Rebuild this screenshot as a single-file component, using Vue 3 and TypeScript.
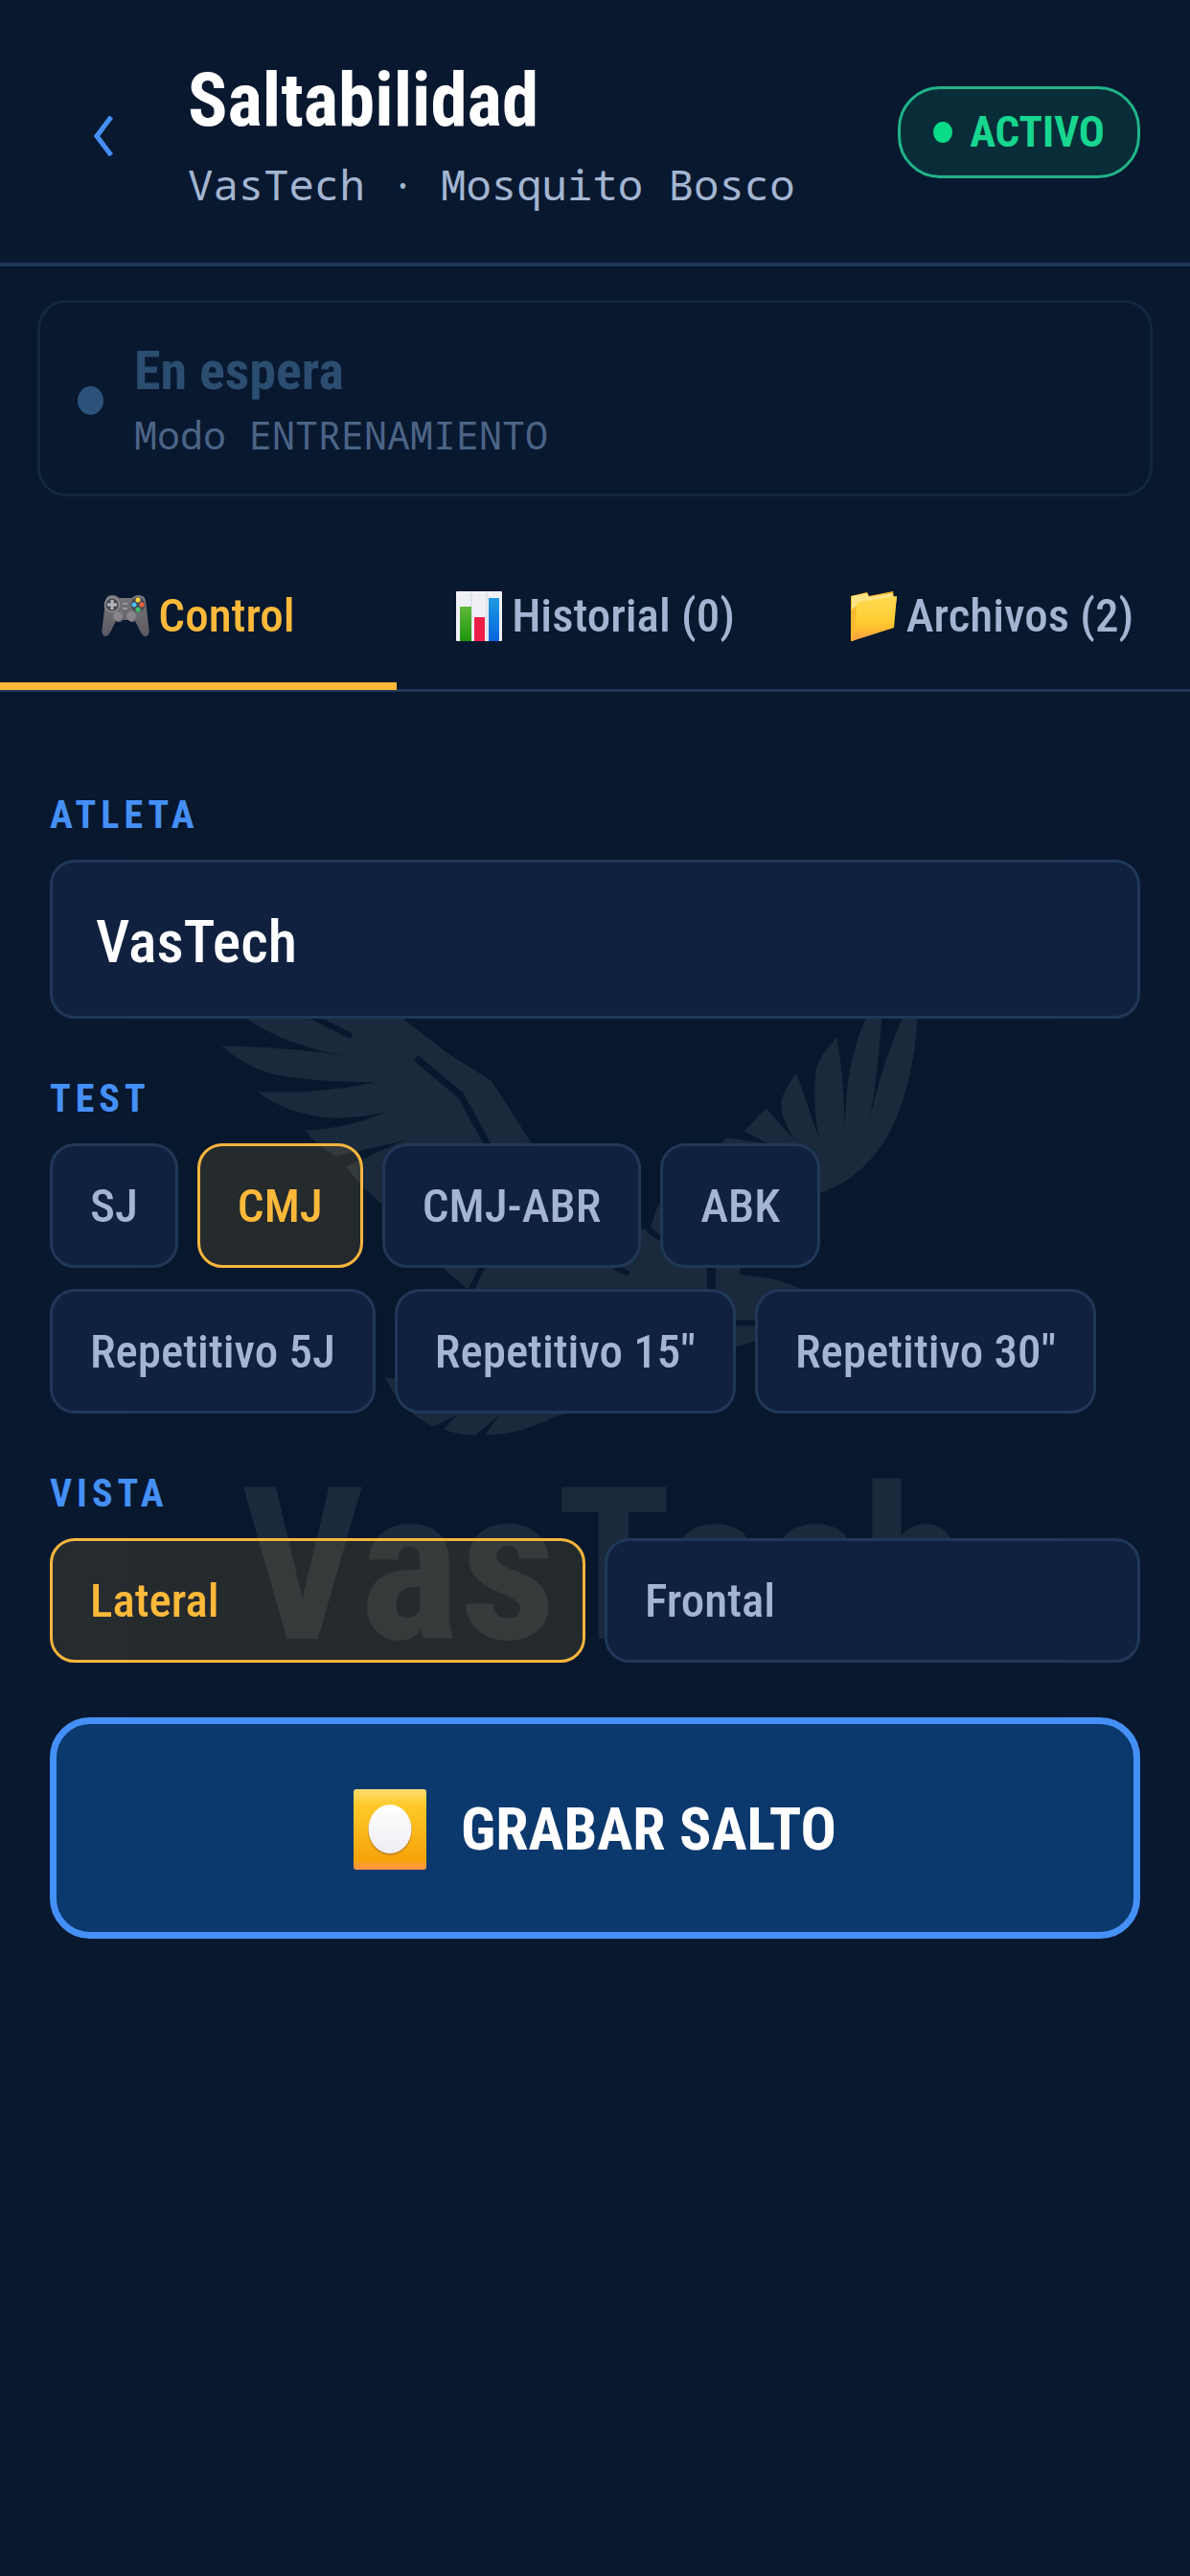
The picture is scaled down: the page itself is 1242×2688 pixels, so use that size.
<script setup lang="ts">
import { ref } from 'vue'

type TabId = 'control' | 'historial' | 'archivos'

const tabs: { id: TabId; label: string }[] = [
  { id: 'control', label: 'Control' },
  { id: 'historial', label: 'Historial (0)' },
  { id: 'archivos', label: 'Archivos (2)' },
]
const tests = ['SJ', 'CMJ', 'CMJ-ABR', 'ABK', 'Repetitivo 5J', 'Repetitivo 15"', 'Repetitivo 30"']
const views = ['Lateral', 'Frontal']

const activeTab = ref<TabId>('control')
const athlete = ref('VasTech')
const activeTest = ref('CMJ')
const activeView = ref('Lateral')
</script>

<template>
  <div class="screen">
    <header class="header">
      <button class="back" type="button" aria-label="Volver">
        <svg width="20" height="42" viewBox="0 0 20 42" aria-hidden="true">
          <path d="M18 1 L3 21 L18 41" fill="none" stroke="#4590f7" stroke-width="5" />
        </svg>
      </button>
      <div class="heading">
        <h1 class="title">Saltabilidad</h1>
        <p class="subtitle">VasTech · Mosquito Bosco</p>
      </div>
      <div class="badge"><span class="badge-dot"></span>ACTIVO</div>
    </header>

    <section class="status">
      <span class="status-dot"></span>
      <div>
        <p class="status-title">En espera</p>
        <p class="status-mode">Modo ENTRENAMIENTO</p>
      </div>
    </section>

    <nav class="tabs" role="tablist">
      <button
        v-for="tab in tabs"
        :key="tab.id"
        class="tab"
        :class="{ active: tab.id === activeTab }"
        type="button"
        role="tab"
        :aria-selected="tab.id === activeTab"
        @click="activeTab = tab.id"
      >
        <svg v-if="tab.id === 'control'" class="tab-icon" viewBox="0 0 50 54" aria-hidden="true">
          <defs>
            <linearGradient id="pad" x1="0" y1="0" x2="0" y2="1">
              <stop offset="0" stop-color="#77777b" />
              <stop offset="1" stop-color="#5d5860" />
            </linearGradient>
          </defs>
          <path d="M4 11 Q5 5 11 5 Q16 5 18 8 H32 Q34 5 39 5 Q45 5 46 11 L49.500 41 Q50 48 46 48 Q43 48 40 42 L35 32 Q31 35 28 31 H22 Q19 35 15 32 L10 42 Q7 48 4 48 Q0 48 .5 41 Z" fill="url(#pad)" />
          <circle cx="11" cy="15" r="7.500" fill="#4b4b52" stroke="#909096" stroke-width="1.500" />
          <path d="M11 10 V20 M6 15 H16" stroke="#b5b5bb" stroke-width="3" />
          <circle cx="38" cy="15" r="7.500" fill="#4b4b52" />
          <circle cx="38" cy="10" r="2.500" fill="#ffd33d" />
          <circle cx="38" cy="20" r="2.500" fill="#36c26e" />
          <circle cx="34" cy="15" r="2.500" fill="#4cc3f2" />
          <circle cx="42" cy="15" r="2.500" fill="#f06245" />
          <circle cx="17" cy="27" r="5" fill="#88868c" />
          <circle cx="31" cy="27" r="5" fill="#88868c" />
          <path d="M22 14 H27 M22 19 H27" stroke="#98989e" stroke-width="2" />
        </svg>
        <svg v-else-if="tab.id === 'historial'" class="tab-icon" viewBox="0 0 50 54" aria-hidden="true">
          <defs>
            <linearGradient id="bar-green" x1="0" y1="0" x2="0" y2="1">
              <stop offset="0" stop-color="#5fb83a" />
              <stop offset="1" stop-color="#1f960e" />
            </linearGradient>
            <linearGradient id="bar-blue" x1="0" y1="0" x2="0" y2="1">
              <stop offset="0" stop-color="#1e9be0" />
              <stop offset="1" stop-color="#0765e0" />
            </linearGradient>
          </defs>
          <rect x="1" y="1" width="48" height="52" rx="1" fill="#f0f1f6" />
          <path d="M17 2 V52 M33 2 V52" stroke="#dfe2ea" stroke-width="2" />
          <rect x="5" y="17" width="12" height="36" fill="url(#bar-green)" />
          <rect x="20" y="28" width="11" height="25" fill="#f01f48" />
          <rect x="35" y="8" width="11" height="45" fill="url(#bar-blue)" />
        </svg>
        <svg v-else class="tab-icon" viewBox="0 0 50 54" aria-hidden="true">
          <defs>
            <linearGradient id="folder" x1="0" y1="0" x2="0" y2="1">
              <stop offset="0" stop-color="#ffdb52" />
              <stop offset=".6" stop-color="#fecb2f" />
              <stop offset="1" stop-color="#fb9a40" />
            </linearGradient>
          </defs>
          <path d="M1 6 L18 2 L20 6 L45 1 L46 7 L49 7 L47 20 L3 53 L1 53 Z" fill="#f7b92d" />
          <path d="M2 6 L18 3 L20 7 L44 3 L45 8 L10 14 L2 20 Z" fill="#ffe487" />
          <path d="M10 12 L49 6 L46 39 L2 53 Q6 35 7 15 Q7 13 10 12 Z" fill="url(#folder)" />
        </svg>
        <span>{{ tab.label }}</span>
      </button>
    </nav>

    <main class="panel">
      <svg class="watermark" viewBox="136 842 968 960" aria-hidden="true">
        <rect x="136" y="842" width="968" height="960" fill="#07172c" />
        <g fill="#1a293b">
          <path
            d="M225 1000 Q300 1010 365 1022 L420 1063 L465 1098 L512 1128 L553 1192 Q610 1260 677 1285 Q683 1250 705 1238 L757 1187 L800 1193 L775 1180 L798 1156 L828 1190 Q812 1165 814 1148 Q818 1133 830 1120 L853 1187 Q846 1150 850 1115 Q856 1098 872 1082 Q880 1130 880 1182 Q880 1110 902 1063 L921 1010 Q918 1110 904 1180 Q916 1115 940 1063 L956 1010 Q960 1090 940 1150 Q918 1218 862 1242 Q800 1262 771 1323 L771 1330 Q810 1332 835 1345 L850 1362 Q810 1355 790 1398 L770 1404 Q700 1440 577 1478 Q540 1497 505 1497 L520 1476 L495 1497 Q475 1497 462 1491 L476 1476 L450 1488 Q415 1470 401 1437 L440 1440 Q500 1400 487 1345 L461 1323 L396 1255 Q377 1240 360 1217 L420 1190 L350 1206 Q330 1197 317 1179 Q360 1178 402 1160 Q360 1170 325 1164 Q290 1157 268 1139 Q330 1142 390 1129 Q330 1129 285 1121 Q255 1113 230 1091 Q310 1093 362 1102 Q300 1092 256 1063 Z"
          />
        </g>
        <g fill="none" stroke="#07172c" stroke-width="6">
          <path d="M325 1061 L366 1081" />
          <path d="M433 1104 L480 1143 L508 1195" stroke-width="7" />
          <path d="M741 1310 V1350" stroke-width="9" />
          <path d="M503 1320 L489 1348 M640 1321 L655 1329 M675 1283 L700 1300 M765 1380 H795" />
        </g>
        <text class="watermark-text" x="629" y="1709" text-anchor="middle">VasTech</text>
      </svg>

      <div class="field">
        <label class="label" for="athlete">ATLETA</label>
        <input id="athlete" v-model="athlete" class="input" type="text" />
      </div>

      <div class="field" role="group" aria-labelledby="test-label">
        <span id="test-label" class="label">TEST</span>
        <div class="chips">
          <button
            v-for="test in tests"
            :key="test"
            class="chip"
            :class="{ active: test === activeTest }"
            type="button"
            :aria-pressed="test === activeTest"
            @click="activeTest = test"
          >
            {{ test }}
          </button>
        </div>
      </div>

      <div class="field" role="group" aria-labelledby="view-label">
        <span id="view-label" class="label">VISTA</span>
        <div class="views">
          <button
            v-for="view in views"
            :key="view"
            class="chip"
            :class="{ active: view === activeView }"
            type="button"
            :aria-pressed="view === activeView"
            @click="activeView = view"
          >
            {{ view }}
          </button>
        </div>
      </div>

      <button class="record" type="button">
        <svg class="record-icon" viewBox="0 0 76 84" aria-hidden="true">
          <defs>
            <linearGradient id="rec" x1="0" y1="0" x2="0" y2="1">
              <stop offset="0" stop-color="#ffdc70" />
              <stop offset=".2" stop-color="#fdc928" />
              <stop offset=".88" stop-color="#f7a30a" />
              <stop offset="1" stop-color="#ff9350" />
            </linearGradient>
            <linearGradient id="disc" x1="0" y1="0" x2="0" y2="1">
              <stop offset="0" stop-color="#ffffff" />
              <stop offset="1" stop-color="#eeeef3" />
            </linearGradient>
          </defs>
          <rect width="76" height="84" rx="3" fill="url(#rec)" />
          <ellipse cx="38" cy="43" rx="23" ry="26" fill="#c98a1c" />
          <ellipse cx="38" cy="41.500" rx="22.500" ry="25.500" fill="url(#disc)" />
        </svg>
        <span>GRABAR SALTO</span>
      </button>
    </main>
  </div>
</template>

<style>
body {
  margin: 0;
  background: #08182f;
}
</style>

<style scoped>
.screen {
  --line: #203757;
  --muted: #a3b5d1;
  --blue: #4590f7;
  --amber: #fdb93a;
  --mono: "Noto Sans Mono", "DejaVu Sans Mono", "Liberation Mono", monospace;
  min-height: 100vh;
  background: #08182f;
  color: #fff;
  font-family: "Roboto Condensed", Roboto, sans-serif;
}

.screen *,
.screen {
  box-sizing: border-box;
}

h1,
p {
  margin: 0;
}

button {
  font-family: inherit;
  margin: 0;
}

.header {
  display: flex;
  align-items: center;
  padding: 56px 52px 55px;
  border-bottom: 4px solid var(--line);
}

.back {
  display: flex;
  justify-content: center;
  width: 112px;
  margin-right: 32px;
  padding: 20px 0 12px;
  border: 0;
  background: none;
}

.heading {
  flex: 1;
  padding-top: 3px;
}

.title {
  font-size: 77px;
  line-height: 92px;
  font-weight: 700;
}

.subtitle {
  margin-top: 14px;
  color: var(--muted);
  font-family: var(--mono);
  font-size: 44px;
  line-height: 54px;
}

.badge {
  display: flex;
  align-items: center;
  gap: 18px;
  padding: 18px 34px;
  border: 3px solid #20b489;
  border-radius: 44px;
  background: #082d38;
  color: #18d68f;
  font-size: 45px;
  line-height: 54px;
  font-weight: 700;
}

.badge-dot {
  width: 20px;
  height: 22px;
  border-radius: 50%;
  background: #09dc88;
}

.status {
  display: flex;
  align-items: center;
  gap: 32px;
  margin: 35px 39px;
  padding: 41px 39px 36px;
  border: 3px solid #15263f;
  border-radius: 30px;
}

.status-dot {
  width: 27px;
  height: 30px;
  border-radius: 50%;
  background: #2b5279;
}

.status-title {
  color: #2b4d70;
  font-size: 56px;
  line-height: 60px;
  font-weight: 700;
}

.status-mode {
  margin-top: 12px;
  color: #4b6486;
  font-family: var(--mono);
  font-size: 40px;
  line-height: 50px;
}

.tabs {
  display: flex;
  border-bottom: 3px solid var(--line);
}

.tab {
  display: flex;
  flex: 1 1 0;
  align-items: center;
  justify-content: center;
  gap: 9px;
  margin-bottom: -1px;
  padding: 62px 0 41px;
  border: 0;
  border-bottom: 8px solid transparent;
  background: none;
  color: var(--muted);
  font-size: 49px;
  line-height: 56px;
  font-weight: 500;
  white-space: nowrap;
}

.tab.active {
  border-bottom-color: var(--amber);
  color: var(--amber);
}

.tab-icon {
  width: 50px;
  height: 54px;
}

.panel {
  position: relative;
  display: flex;
  flex-direction: column;
  padding: 107px 52px 60px;
}

.watermark {
  position: absolute;
  top: 120px;
  left: 11%;
  width: 78%;
}

.watermark-text {
  fill: #1a293b;
  font-size: 222px;
  font-weight: 700;
}

.field {
  position: relative;
  display: flex;
  flex-direction: column;
  gap: 24px;
}

.field + .field {
  margin-top: 62px;
}

.label {
  color: var(--blue);
  font-size: 40px;
  line-height: 44px;
  font-weight: 700;
  letter-spacing: 5px;
}

.input {
  width: 100%;
  padding: 51px 45px 45px;
  border: 3px solid var(--line);
  border-radius: 26px;
  outline: 0;
  background: #102140;
  color: #fff;
  font-family: inherit;
  font-size: 62px;
  line-height: 64px;
  font-weight: 500;
}

.chips {
  display: flex;
  flex-wrap: wrap;
  gap: 22px 20px;
}

.chip {
  padding: 36px 39px 34px;
  border: 3px solid var(--line);
  border-radius: 26px;
  background: #102140;
  color: var(--muted);
  font-size: 49px;
  line-height: 54px;
  font-weight: 500;
  text-align: left;
}

.chip.active {
  border-color: #f6b53d;
  background: rgba(253, 185, 58, 0.12);
  color: var(--amber);
}

.views {
  display: flex;
  gap: 20px;
}

.views .chip {
  flex: 1 1 0;
}

.record {
  position: relative;
  display: flex;
  align-items: center;
  justify-content: center;
  gap: 36px;
  width: 100%;
  margin-top: 57px;
  padding: 68px 0 65px;
  border: 7px solid var(--blue);
  border-radius: 42px;
  background: #0b386d;
  color: #fff;
  font-size: 62px;
  line-height: 72px;
  font-weight: 700;
}

.record-icon {
  width: 76px;
  height: 84px;
}
</style>
